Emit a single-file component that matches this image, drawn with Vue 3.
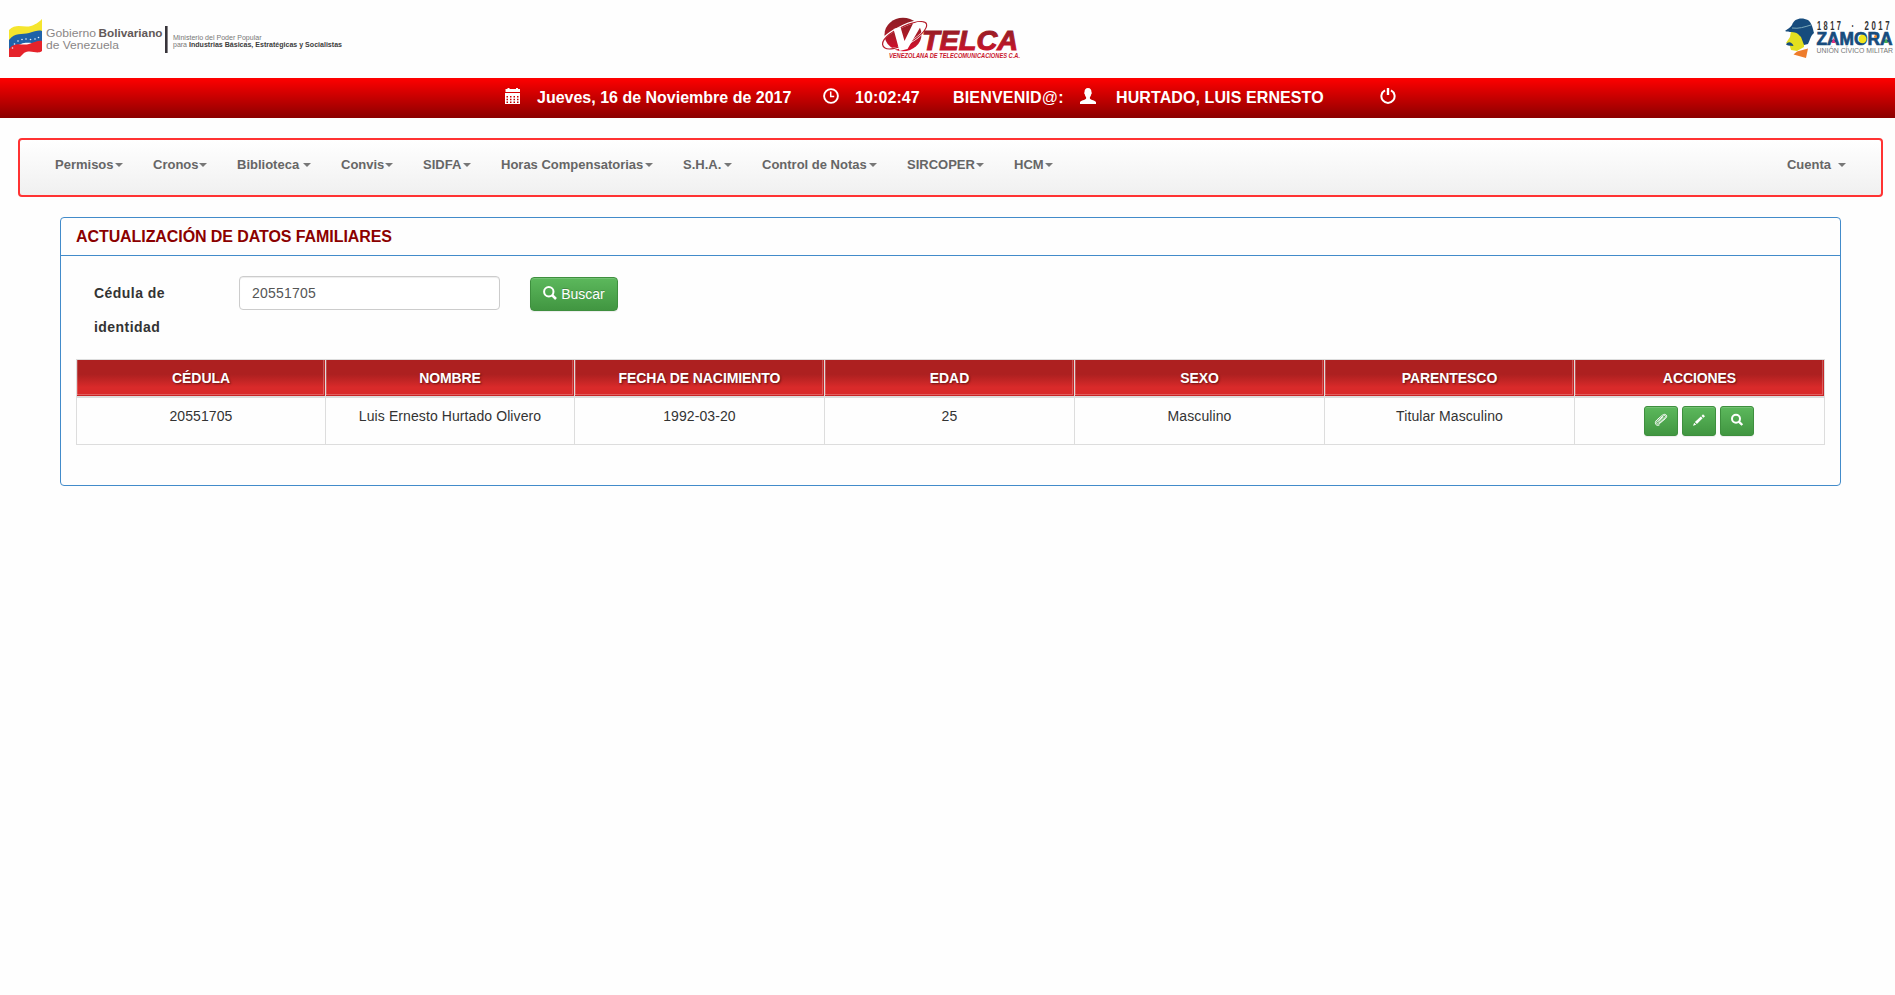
<script setup>
const menu = [
  { label: 'Permisos', width: 98 },
  { label: 'Cronos', width: 84 },
  { label: 'Biblioteca', width: 104 },
  { label: 'Convis', width: 82 },
  { label: 'SIDFA', width: 78 },
  { label: 'Horas Compensatorias', width: 182 },
  { label: 'S.H.A.', width: 79 },
  { label: 'Control de Notas', width: 145 },
  { label: 'SIRCOPER', width: 107 },
  { label: 'HCM', width: 69 },
]
const columns = ['CÉDULA', 'NOMBRE', 'FECHA DE NACIMIENTO', 'EDAD', 'SEXO', 'PARENTESCO', 'ACCIONES']
const rows = [['20551705', 'Luis Ernesto Hurtado Olivero', '1992-03-20', '25', 'Masculino', 'Titular Masculino']]
</script>

<template>
  <div class="page">
    <header class="logos">
      <svg class="logo-gob" width="344" height="60" viewBox="0 0 344 60">
        <path d="M9 36V30C16 23 23 28 31 26C37 24 40 21 42 19V33C35 38 28 33 20 36C14 39 11 42 9 46Z" fill="#f5e52e" />
        <path d="M9 45V40C15 32 22 35 29 33C35 31 39 30 42 31V43C36 45 28 41 21 44C15 46 12 49 9 51Z" fill="#1f62a8" />
        <path d="M9 57V49C15 41 22 46 29 44C35 42 39 40 42 41V51C37 55 31 49 24 53L20 57Z" fill="#e5232b" />
        <g fill="#e8f2ff">
          <circle cx="12.500" cy="48" r=".8" /><circle cx="14.500" cy="44" r=".8" /><circle cx="18" cy="41" r=".8" />
          <circle cx="22" cy="39.500" r=".8" /><circle cx="26" cy="39" r=".8" /><circle cx="30.500" cy="39.500" r=".8" />
          <circle cx="35" cy="39" r=".8" /><circle cx="38.500" cy="37.500" r=".8" />
        </g>
        <g font-family="Liberation Sans, Arial, sans-serif">
          <text x="46" y="37.300" font-size="11.500" fill="#8a8686" textLength="50" lengthAdjust="spacingAndGlyphs">Gobierno</text>
          <text x="98.500" y="37.300" font-size="11.500" font-weight="700" fill="#625858" textLength="64" lengthAdjust="spacingAndGlyphs">Bolivariano</text>
          <text x="46" y="49.300" font-size="11.500" fill="#8a8686" textLength="73" lengthAdjust="spacingAndGlyphs">de Venezuela</text>
          <text x="173" y="39.600" font-size="6.600" fill="#777" textLength="88.500" lengthAdjust="spacingAndGlyphs">Ministerio del Poder Popular</text>
          <text x="173" y="47.200" font-size="6.600" fill="#777" textLength="14" lengthAdjust="spacingAndGlyphs">para</text>
          <text x="189" y="47.200" font-size="6.600" font-weight="700" fill="#3c3c3c" textLength="153" lengthAdjust="spacingAndGlyphs">Industrias Básicas, Estratégicas y Socialistas</text>
        </g>
        <rect x="165" y="26" width="2.600" height="27" fill="#37343a" />
      </svg>

      <svg class="logo-vtelca" width="150" height="66" viewBox="880 0 150 66">
        <defs>
          <linearGradient id="vt" x1="0" y1="0" x2="0" y2="1">
            <stop offset="0" stop-color="#8d1c24" /><stop offset=".5" stop-color="#a91c28" /><stop offset="1" stop-color="#d80d2c" />
          </linearGradient>
        </defs>
        <ellipse cx="903" cy="34.500" rx="18.500" ry="16.700" fill="url(#vt)" />
        <path d="M884 48C878 43 884 35 899 28C912 21 925 19 926.500 24C928 29 919 38 905 45C895 50 886 50 884 48Z" fill="none" stroke="#fff" stroke-width="2.400" />
        <path d="M885 48C879 44 884 36 899 28.500C913 21.500 925 19.500 926.500 24C928 29 919 38 906 44C897 49 888 50 885 48" fill="none" stroke="#b51d2b" stroke-width="1.200" />
        <path d="M893.500 29L900.500 27L904.500 41L913 23.500C916 22 920 21.500 923 22.500L907.500 49L899.500 51Z" fill="#fff" />
        <text x="922" y="49.500" font-family="Liberation Sans, Arial, sans-serif" font-size="28.500" font-weight="700" font-style="italic" fill="url(#vt)" stroke="url(#vt)" stroke-width="1.100" textLength="96" lengthAdjust="spacingAndGlyphs">TELCA</text>
        <text x="889" y="57.500" font-family="Liberation Sans, Arial, sans-serif" font-size="6.800" font-weight="700" font-style="italic" fill="#c9162d" textLength="131" lengthAdjust="spacingAndGlyphs">VENEZOLANA DE TELECOMUNICACIONES C.A.</text>
      </svg>

      <svg class="logo-zamora" width="111" height="60" viewBox="1784 0 111 60">
        <path d="M1791 31L1813 33L1804 38L1804 47L1797 51L1791 50L1789.500 45L1786 43L1790 37Z" fill="#e3df20" />
        <path d="M1785 31C1787 29 1790 28 1792 25C1794 18 1802 17 1808 20C1812 23 1813 29 1814 33C1811 35 1810 40 1808 44L1804 45L1801 37L1798 34C1794 31 1789 33 1785 31Z" fill="#174c7d" />
        <path d="M1792 28C1799 29 1804 27 1811 25" stroke="#7daaba" stroke-width="1" fill="none" />
        <path d="M1786 44.500C1788 41 1792 42 1793.500 46L1788 45.500Z" fill="#174c7d" />
        <path d="M1797 51.500L1808 48.500L1806 58L1793.500 54.500Z" fill="#ee7c2b" />
        <g font-family="Liberation Sans, Arial, sans-serif">
          <g font-size="12" font-weight="700" fill="#333" letter-spacing="4">
            <text transform="translate(1817 30) scale(.62 1)">1817</text>
            <text transform="translate(1851.500 30) scale(.62 1)">·</text>
            <text transform="translate(1864.500 30) scale(.65 1)">2017</text>
          </g>
          <text x="1816.500" y="45" font-size="17.500" font-weight="700" fill="#174c7d" stroke="#174c7d" stroke-width=".7" textLength="76" lengthAdjust="spacingAndGlyphs">ZAMORA</text>
          <ellipse cx="1862.500" cy="39" rx="4" ry="4.300" fill="#f1e51c" />
          <path d="M1831.500 43L1833.500 38L1835.500 43Z" fill="#e23183" />
          <circle cx="1875.500" cy="36.500" r="1.500" fill="#f08a2b" /><path d="M1884 43L1886 38L1888 43Z" fill="#45aa55" />
          <text x="1816.500" y="52.500" font-size="6.500" fill="#777" textLength="76.500" lengthAdjust="spacingAndGlyphs">UNIÓN CÍVICO MILITAR</text>
        </g>
      </svg>
    </header>

    <div class="status">
      <svg class="ico i-cal" viewBox="0 0 16 16"><path fill="#fff" fill-rule="evenodd" d="M.5 1H2.500V0H4.500V1H11V0H13V1H15V4H.5ZM0 5H15V16H0ZM1.500 8v1.500h1.500V8ZM5 8v1.500h1.500V8ZM8.500 8v1.500h1.500V8ZM12 8v1.500h1.500V8ZM1.500 10.700v1.500h1.500v-1.500ZM5 10.700v1.500h1.500v-1.500ZM8.500 10.700v1.500h1.500v-1.500ZM12 10.700v1.500h1.500v-1.500ZM1.500 13.400v1.500h1.500v-1.500ZM5 13.400v1.500h1.500v-1.500ZM8.500 13.400v1.500h1.500v-1.500ZM12 13.400v1.500h1.500v-1.500Z" /></svg>
      <span class="date">Jueves, 16 de Noviembre de 2017</span>
      <svg class="ico i-clock" viewBox="0 0 16 16"><circle cx="8" cy="8" r="6.900" fill="none" stroke="#fff" stroke-width="1.900" /><path d="M7.700 3.500V8.500H11.200" fill="none" stroke="#fff" stroke-width="1.500" /></svg>
      <span class="time">10:02:47</span>
      <span class="welcome">BIENVENID<i>@</i>:</span>
      <svg class="ico i-user" viewBox="0 0 16 16"><path fill="#fff" d="M8 0C10.500 0 11.500 1.800 11.500 4.200C12 4.400 11.800 6 11.200 6.300C11 8 10.200 8.700 9.900 9.300V10.500C10.500 12 16 12.600 16 14.300V16H0V14.300C0 12.600 5.500 12 6.100 10.500V9.300C5.800 8.700 5 8 4.800 6.300C4.200 6 4 4.400 4.500 4.200C4.500 1.800 5.500 0 8 0Z" /></svg>
      <span class="user">HURTADO, LUIS ERNESTO</span>
      <svg class="ico i-power" viewBox="0 0 16 16"><path d="M5 2.400A6.600 6.600 0 1 0 11 2.400" fill="none" stroke="#fff" stroke-width="2" /><path d="M8 0V7" stroke="#fff" stroke-width="2.400" /></svg>
    </div>

    <nav class="navbar">
      <a v-for="m in menu" :key="m.label" :style="{ width: m.width + 'px' }">{{ m.label }}<b class="caret"></b></a>
      <a class="account">Cuenta<b class="caret"></b></a>
    </nav>

    <section class="panel">
      <h3>ACTUALIZACIÓN DE DATOS FAMILIARES</h3>
      <div class="body">
        <form class="search" @submit.prevent>
          <label for="cedula">Cédula de identidad</label>
          <input id="cedula" type="text" value="20551705" />
          <button class="btn" type="submit">
            <svg width="14" height="14" viewBox="0 0 14 14"><circle cx="5.800" cy="5.800" r="4.700" fill="none" stroke="#fff" stroke-width="2" /><path d="M9 9L13 13" stroke="#fff" stroke-width="2.500" /></svg>
            <span>Buscar</span>
          </button>
        </form>
        <table>
          <colgroup>
            <col class="narrow" /><col class="narrow" /><col v-for="n in 5" :key="n" class="wide" />
          </colgroup>
          <thead>
            <tr><th v-for="c in columns" :key="c">{{ c }}</th></tr>
          </thead>
          <tbody>
            <tr v-for="r in rows" :key="r[0]">
              <td v-for="(c, i) in r" :key="i">{{ c }}</td>
              <td>
                <div class="actions">
                  <button class="btn sm" type="button"><svg width="14" height="14" viewBox="0 0 14 14"><path d="M9.200 4.100L5 8.300C4.100 9.300 5.200 10.200 6.100 9.300L10.900 4.900C12.600 3.200 11 1.500 9.200 3L3.400 8.200C1.500 10.200 3.700 12.200 5.700 10.400L11.400 5.600C14.400 2.900 11.700-.2 8.400 2.200L2.800 7C-.4 9.800 2.200 13.800 5.500 11.900" fill="none" stroke="#fff" stroke-width="1" /></svg></button>
                  <button class="btn sm" type="button"><svg width="14" height="14" viewBox="0 0 14 14"><path d="M1 12.800L2.200 9.700L4.200 11.700ZM2.900 8.900L8.800 3.600L10.600 5.300L4.900 10.900ZM9.500 2.900L11 1.300L13 3.200L11.400 4.700Z" fill="#fff" /></svg></button>
                  <button class="btn sm" type="button"><svg width="14" height="14" viewBox="0 0 14 14"><circle cx="6" cy="5.800" r="4" fill="none" stroke="#fff" stroke-width="2" /><path d="M8.800 8.600L12.300 12" stroke="#fff" stroke-width="2.300" /></svg></button>
                </div>
              </td>
            </tr>
          </tbody>
        </table>
      </div>
    </section>
  </div>
</template>

<style>
body {
  margin: 0;
  background: #fefefe;
}
</style>

<style scoped>
* {
  box-sizing: border-box;
}
.page {
  width: 1895px;
  height: 995px;
  overflow: hidden;
  background: #fefefe;
  font: 14px/20px "Liberation Sans", Arial, sans-serif;
  color: #333;
}
.logos {
  height: 78px;
  display: flex;
  align-items: flex-start;
}
.logos svg {
  flex: none;
}
.logo-vtelca {
  margin-left: 536px;
}
.logo-zamora {
  margin-left: auto;
}
.status {
  height: 40px;
  padding: 10px 0 0 505px;
  display: flex;
  align-items: flex-start;
  background: linear-gradient(#f00, #8b0000);
  color: #fff;
  font-size: 16px;
  font-weight: 700;
  white-space: nowrap;
}
.status span {
  flex: none;
}
.ico {
  width: 16px;
  height: 16px;
  flex: none;
}
.date {
  width: 286px;
  margin-left: 16px;
}
.time {
  width: 98px;
  margin-left: 16px;
  letter-spacing: 0.1px;
}
.welcome {
  width: 127px;
  letter-spacing: 0.18px;
}
.welcome i {
  font-style: normal;
  font-weight: 400;
}
.user {
  width: 264px;
  margin-left: 20px;
  letter-spacing: 0.1px;
}
.navbar {
  height: 59px;
  margin: 20px 12px 0 18px;
  padding: 15px 35px 0;
  border: 2px solid #f33;
  border-radius: 4px;
  background: linear-gradient(#fff, #f0f0f0);
  display: flex;
  align-items: flex-start;
  font-size: 13px;
  font-weight: 700;
  color: #666;
  white-space: nowrap;
}
.navbar a {
  flex: none;
  display: flex;
  align-items: center;
  justify-content: space-between;
  padding-right: 30px;
}
.navbar .account {
  margin-left: auto;
  padding-right: 0;
  gap: 7px;
}
.caret {
  border: 4px solid transparent;
  border-top-color: #777;
  border-bottom: 0;
}
.panel {
  height: 269px;
  margin: 20px 54px 0 60px;
  border: 1px solid #428bca;
  border-radius: 4px;
}
h3 {
  height: 38px;
  margin: 0;
  padding: 9px 15px;
  border-bottom: 1px solid #428bca;
  font-size: 16px;
  line-height: 20px;
  letter-spacing: -0.08px;
  color: #8b0000;
}
.body {
  padding: 20px 15px;
}
.search {
  display: flex;
  align-items: flex-start;
  height: 83px;
  padding-left: 18px;
}
label {
  width: 145px;
  padding-right: 50px;
  font-weight: 700;
  line-height: 34px;
  letter-spacing: 0.45px;
}
input {
  width: 261px;
  height: 34px;
  padding: 6px 12px;
  border: 1px solid #ccc;
  border-radius: 4px;
  box-shadow: inset 0 1px 1px rgba(0, 0, 0, 0.075);
  background: #fff;
  font: inherit;
  letter-spacing: 0.2px;
  color: #555;
}
.btn {
  display: flex;
  align-items: center;
  justify-content: center;
  width: 88px;
  height: 34px;
  margin: 1px 0 0 30px;
  padding: 0;
  gap: 4px;
  border: 1px solid #3e8f3e;
  border-radius: 4px;
  background: linear-gradient(#5cb85c, #419641);
  box-shadow: inset 0 1px 0 rgba(255, 255, 255, 0.15), 0 1px 1px rgba(0, 0, 0, 0.075);
  font: inherit;
  color: #fff;
  text-shadow: 0 -1px 0 rgba(0, 0, 0, 0.2);
}
.btn.sm {
  width: 34px;
  height: 30px;
  margin: 0;
  border-radius: 3px;
}
.btn svg {
  position: relative;
  top: -1px;
}
table {
  width: 1749px;
  table-layout: fixed;
  border-collapse: collapse;
  text-align: center;
}
.narrow {
  width: 249px;
}
.wide {
  width: 250px;
}
th,
td {
  padding: 8px;
  border: 1px solid #ddd;
  vertical-align: top;
}
td {
  letter-spacing: 0.09px;
}
th {
  border-bottom-width: 2px;
  color: #fff;
  letter-spacing: -0.08px;
  background: linear-gradient(#ad2020 40%, #d92a2a 76%);
  background-clip: padding-box;
  box-shadow: inset -1px -1px 0 #c82525, inset -2px -2px 0 rgba(255, 255, 255, 0.25), inset 1px 0 0 rgba(255, 255, 255, 0.2);
  text-shadow: 1px 1px 2px rgba(0, 0, 0, 0.5);
}
.actions {
  display: flex;
  justify-content: center;
  gap: 4px;
  padding-right: 1px;
}
</style>
